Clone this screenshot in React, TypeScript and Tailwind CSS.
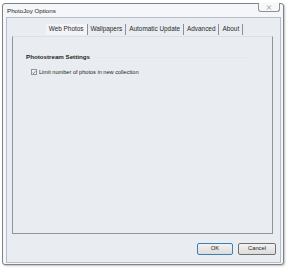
import React from "react";

const tabs = ["Web Photos", "Wallpapers", "Automatic Update", "Advanced", "About"];

const App = () => {
  return (
    <div className="w-[289px] h-[270px] bg-white pt-[3px] pl-[2px] font-['Liberation_Sans',Arial,sans-serif] text-[#1e1e1e]">
      <div className="w-[282px] h-[262px] border border-[#7f8388] rounded-[3px] bg-[#f4f6f9] flex flex-col shadow-[1px_1px_2px_rgba(0,0,0,0.25)]">
        {/* title bar */}
        <div className="h-[13px] flex items-start justify-between">
          <span className="pl-[4px] leading-[13px] text-[6.2px]">PhotoJoy Options</span>
          <div className="-mt-[1px] mr-[3px] w-[22px] h-[9px] border border-t-0 border-[#8d9196] rounded-b-[3px] bg-[#f7f8fa] flex items-center justify-center">
            <svg width="6" height="5" viewBox="0 0 6 5">
              <path d="M1 0.5 L5 4.5 M5 0.5 L1 4.5" stroke="#9a9ea4" strokeWidth="1" />
            </svg>
          </div>
        </div>

        {/* client area */}
        <div className="ml-[3px] mr-[2px] mb-[1px] flex-1 border border-[#b4bcc6] bg-[#e9edf2] flex flex-col">
          <div className="ml-[5px] mr-[7px] flex-1 flex flex-col">
            <div className="mt-[4px] h-[14px] flex justify-center items-center text-[6.4px] text-[#2a2a2a] pl-[4px]">
              {tabs.map((t, i) => (
                <div
                  key={t}
                  className={
                    i === 0
                      ? "h-[11px] px-[3px] border-r border-[#8c9096] flex items-center bg-[#f2f4f7]"
                      : "h-[11px] px-[3px] border-r border-[#8c9096] flex items-center"
                  }
                >
                  {t}
                </div>
              ))}
            </div>

            {/* tab panel */}
            <div className="flex-1 border-x border-b border-t border-[#8f949a] border-t-[#dde1e6] flex flex-col pl-[13px] pr-[22px]">
              <div className="mt-[16px] flex items-center gap-[3px]">
                <span className="font-bold text-[6.2px] leading-[8px]">Photostream Settings</span>
                <div className="flex-1 h-px bg-[#ece6e6]" />
              </div>
              <div className="mt-[7px] ml-[5px] flex items-center gap-[2px]">
                <div className="w-[6px] h-[6px] border border-[#8e949b] bg-[#f4f6f8] flex items-center justify-center">
                  <svg width="5" height="5" viewBox="0 0 5 5">
                    <path d="M0.8 2.6 L2 3.8 L4.3 0.8" stroke="#3d5f86" strokeWidth="0.9" fill="none" />
                  </svg>
                </div>
                <span className="text-[5.6px] leading-[8px]">Limit number of photos in new collection</span>
              </div>
            </div>

            {/* buttons */}
            <div className="mt-[9px] mb-[7px] flex justify-end gap-[5px] mr-[-3px]">
              <button className="w-[36px] h-[12px] border border-[#3c7fb1] rounded-[2px] bg-gradient-to-b from-[#f2f2f2] to-[#dcdcdc] text-[5.8px] leading-none">
                OK
              </button>
              <button className="w-[38px] h-[12px] border border-[#707070] rounded-[2px] bg-gradient-to-b from-[#f2f2f2] to-[#dcdcdc] text-[5.8px] leading-none">
                Cancel
              </button>
            </div>
          </div>
        </div>
      </div>
    </div>
  );
};

export default App;
